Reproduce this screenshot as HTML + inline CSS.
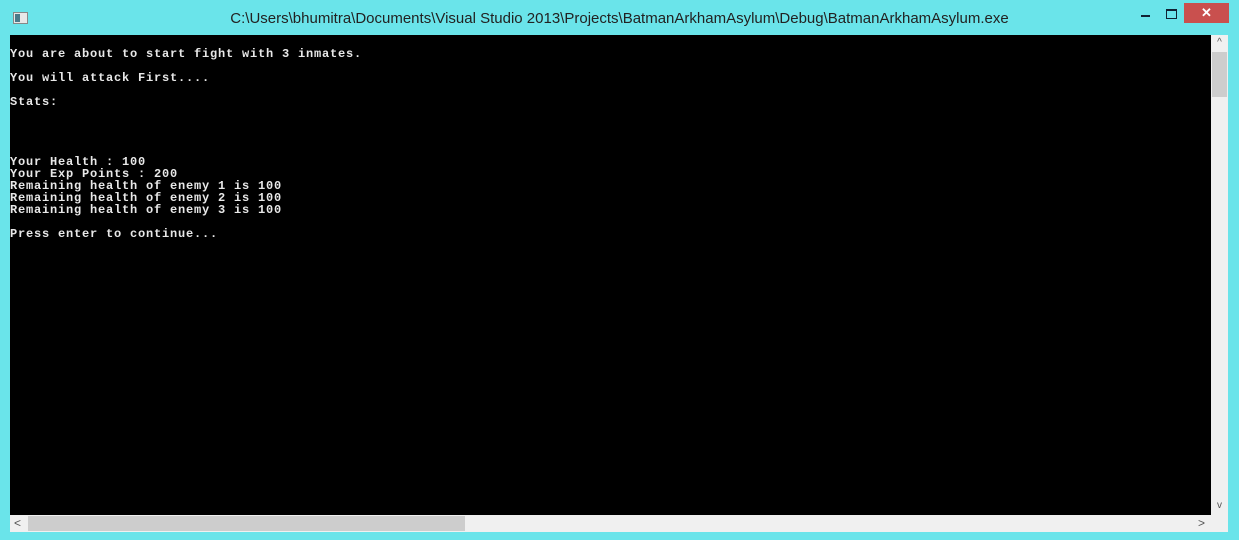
<!DOCTYPE html>
<html><head><style>
body{margin:0;width:1239px;height:543px;background:#fff;overflow:hidden;position:relative;font-family:"Liberation Sans",sans-serif}
.win{position:absolute;left:0;top:0;width:1239px;height:540px;background:#6ae4ea}
.title{position:absolute;left:0;top:10px;width:1239px;text-align:center;font-size:15px;color:#222;}
.con{position:absolute;left:10px;top:35px;width:1201px;height:480px;background:#000}
pre{margin:0;position:absolute;left:10px;top:48px;font-family:"Liberation Mono",monospace;font-weight:bold;font-size:12px;line-height:12px;letter-spacing:0.8px;color:#e8e8e8}
.vs{position:absolute;left:1211px;top:35px;width:17px;height:480px;background:#f0f0f0}
.hs{position:absolute;left:10px;top:515px;width:1201px;height:17px;background:#f0f0f0}
.corner{position:absolute;left:1211px;top:515px;width:17px;height:17px;background:#f0f0f0}
</style></head><body>
<div class="win"></div>
<div style="position:absolute;left:13px;top:12px;width:13px;height:10px;background:#e8e8e8;border:1px solid #888"><div style="width:5px;height:8px;margin:1px;background:#4a7a8a"></div></div>
<div class="title">C:\Users\bhumitra\Documents\Visual Studio 2013\Projects\BatmanArkhamAsylum\Debug\BatmanArkhamAsylum.exe</div>
<div style="position:absolute;left:1141px;top:15px;width:9px;height:2px;background:#123"></div>
<div style="position:absolute;left:1166px;top:9px;width:9px;height:7px;border:1px solid #123;border-top-width:2px"></div>
<div style="position:absolute;left:1184px;top:3px;width:45px;height:20px;background:#c9504e;color:#fff;text-align:center;font-size:13px;line-height:20px;font-weight:bold">✕</div>
<div class="con"></div>
<pre>You are about to start fight with 3 inmates.

You will attack First....

Stats:




Your Health : 100
Your Exp Points : 200
Remaining health of enemy 1 is 100
Remaining health of enemy 2 is 100
Remaining health of enemy 3 is 100

Press enter to continue...</pre>
<div class="vs"><div style="position:absolute;left:1px;top:17px;width:15px;height:45px;background:#cdcdcd"></div><div style="position:absolute;top:2px;width:17px;text-align:center;font-size:10px;color:#555">^</div><div style="position:absolute;top:465px;width:17px;text-align:center;font-size:10px;color:#555">v</div></div>
<div class="hs"><div style="position:absolute;left:18px;top:1px;width:437px;height:15px;background:#cdcdcd"></div><div style="position:absolute;left:4px;top:1px;font-size:12px;color:#555">&lt;</div><div style="position:absolute;left:1188px;top:1px;font-size:12px;color:#555">&gt;</div></div>
<div class="corner"></div>
</body></html>
